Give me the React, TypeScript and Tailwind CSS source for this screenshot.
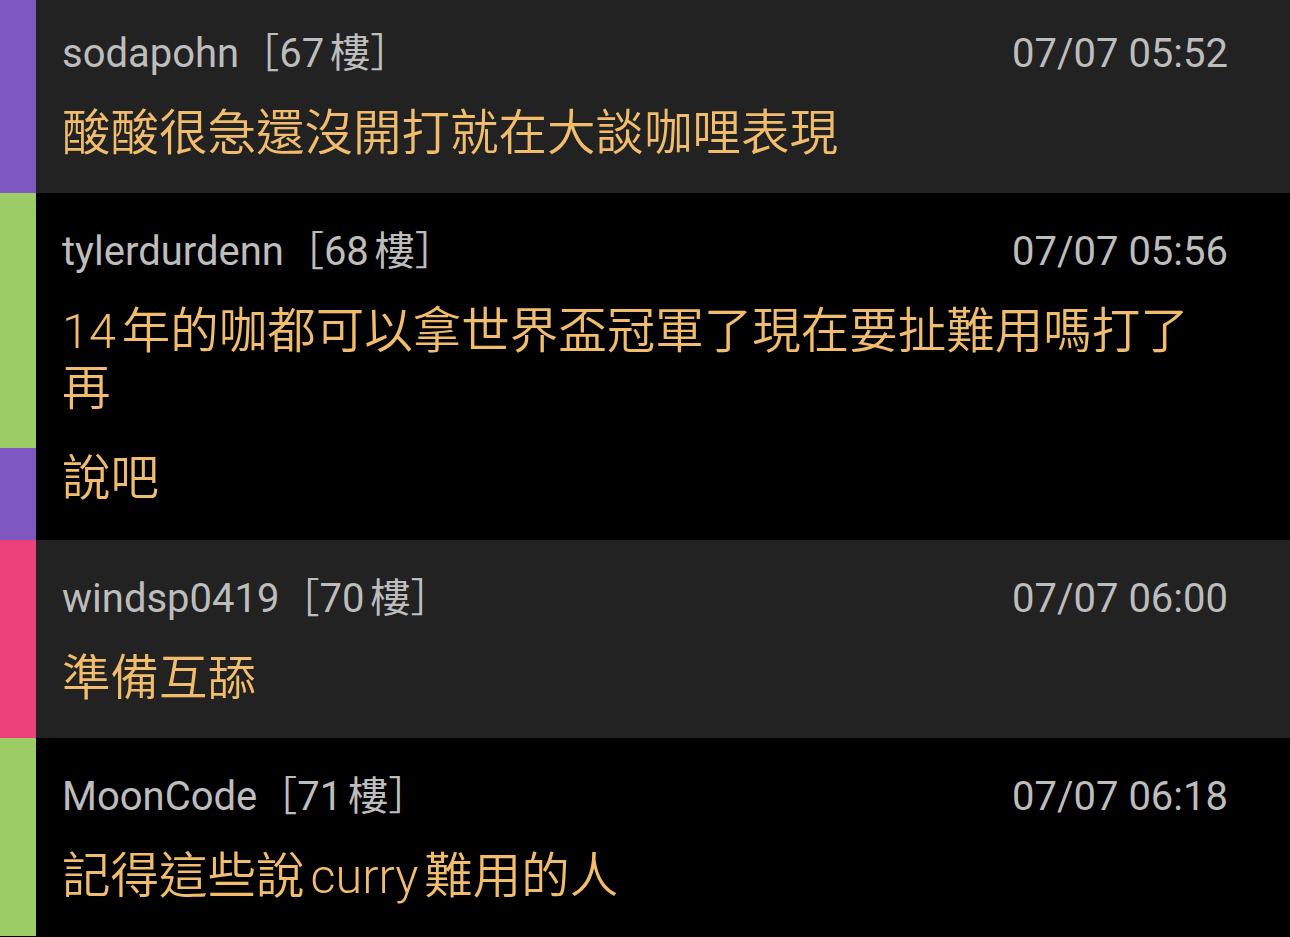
import React from 'react'

type Push = {
  user: string
  floor: string
  time: string
  bar: string
  bg: string
  first?: boolean
  lines: React.ReactNode
  extra?: { bar: string; text: React.ReactNode }
}

const gap = <span className="inline-block w-[6px]" />

const pushes: Push[] = [
  {
    user: 'sodapohn',
    floor: '67',
    time: '07/07 05:52',
    bar: 'bg-[#7e57c2]',
    bg: 'bg-[#222222]',
    first: true,
    lines: '酸酸很急還沒開打就在大談咖哩表現',
  },
  {
    user: 'tylerdurdenn',
    floor: '68',
    time: '07/07 05:56',
    bar: 'bg-[#9ccc65]',
    bg: 'bg-black',
    lines: (
      <>
        14{gap}年的咖都可以拿世界盃冠軍了現在要扯難用嗎打了
        <br />再
      </>
    ),
    extra: { bar: 'bg-[#7e57c2]', text: '說吧' },
  },
  {
    user: 'windsp0419',
    floor: '70',
    time: '07/07 06:00',
    bar: 'bg-[#ec407a]',
    bg: 'bg-[#222222]',
    lines: '準備互舔',
  },
  {
    user: 'MoonCode',
    floor: '71',
    time: '07/07 06:18',
    bar: 'bg-[#9ccc65]',
    bg: 'bg-black',
    lines: (
      <>
        記得這些說{gap}curry{gap}難用的人
      </>
    ),
  },
]

function PushRow({ push }: { push: Push }) {
  return (
    <div className={push.bg}>
      <div className="flex">
        <div className={`w-[36px] shrink-0 ${push.bar}`} />
        <div
          className={`flex-1 pl-[26px] pr-[62px] pb-[31px] ${
            push.first ? 'pt-[31px]' : 'pt-[36px]'
          }`}
        >
          <div className="flex h-[46px] items-center justify-between text-[40px] font-normal leading-[46px] text-[#bdbdbd]">
            <div className="whitespace-nowrap">
              {push.user}［{push.floor}
              <span className="ml-[6px]">樓</span>］
            </div>
            <div className="whitespace-nowrap">{push.time}</div>
          </div>
          <div className="mt-[28px] text-[48.5px] font-[350] leading-[57px] text-[#f1bd6c]">
            {push.lines}
          </div>
        </div>
      </div>
      {push.extra && (
        <div className="flex">
          <div className={`w-[36px] shrink-0 ${push.extra.bar}`} />
          <div className="flex-1 pl-[26px] pr-[62px] pt-[2px] pb-[33px] text-[48.5px] font-[350] leading-[57px] text-[#f1bd6c]">
            {push.extra.text}
          </div>
        </div>
      )}
    </div>
  )
}

export default function App() {
  return (
    <div className="h-[937px] w-[1290px] overflow-hidden bg-black font-[Roboto,'Noto_Sans_CJK_TC',sans-serif]">
      {pushes.map((p) => (
        <PushRow key={p.floor} push={p} />
      ))}
    </div>
  )
}
